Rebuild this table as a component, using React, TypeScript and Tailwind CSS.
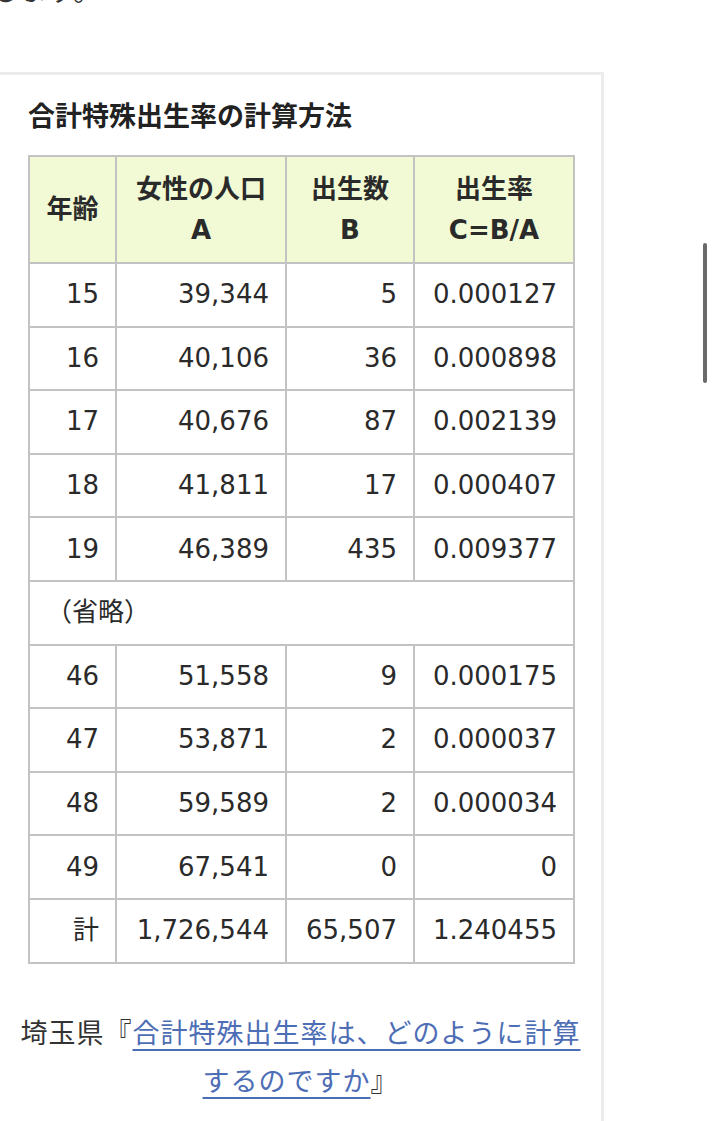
import React from 'react'

type Row = { age: string; pop: string; births: string; rate: string }

const upper: Row[] = [
  { age: '15', pop: '39,344', births: '5', rate: '0.000127' },
  { age: '16', pop: '40,106', births: '36', rate: '0.000898' },
  { age: '17', pop: '40,676', births: '87', rate: '0.002139' },
  { age: '18', pop: '41,811', births: '17', rate: '0.000407' },
  { age: '19', pop: '46,389', births: '435', rate: '0.009377' },
]

const lower: Row[] = [
  { age: '46', pop: '51,558', births: '9', rate: '0.000175' },
  { age: '47', pop: '53,871', births: '2', rate: '0.000037' },
  { age: '48', pop: '59,589', births: '2', rate: '0.000034' },
  { age: '49', pop: '67,541', births: '0', rate: '0' },
  { age: '計', pop: '1,726,544', births: '65,507', rate: '1.240455' },
]

const td = 'border-2 border-[#c3c3c3] px-[16px] text-right align-middle'
const th = 'border-2 border-[#c3c3c3] bg-[#f1fad4] text-center align-middle font-bold leading-[41px]'

function DataRow({ row }: { row: Row }) {
  return (
    <tr className="h-[63.6px]">
      <td className={td}>{row.age}</td>
      <td className={td}>{row.pop}</td>
      <td className={td}>{row.births}</td>
      <td className={td}>{row.rate}</td>
    </tr>
  )
}

export default function App() {
  return (
    <div className="relative min-h-[1121px] overflow-hidden bg-white text-[#222]">
      {/* tail of the previous paragraph */}
      <p className="ml-[-8px] mt-[-34px] font-['Noto_Sans_CJK_JP',sans-serif] text-[27px] leading-[48px] tracking-[1px] text-[#333]">
        します。
      </p>

      {/* calculation box */}
      <div className="ml-[-4px] mt-[58px] w-[608px] border-[3px] border-[#ececec] pb-[30px] pl-[29px] pr-[28px] pt-[22px]">
        <h3 className="mb-[19px] font-['DejaVu_Sans','Noto_Sans_CJK_JP',sans-serif] text-[27px] font-bold leading-[39px] text-[#222]">
          合計特殊出生率の計算方法
        </h3>

        <table className="w-[545px] table-fixed border-collapse border-2 border-[#c3c3c3] font-['DejaVu_Sans','Noto_Sans_CJK_JP',sans-serif] text-[26px] text-[#2a2a2a]">
          <colgroup>
            <col className="w-[87px]" />
            <col className="w-[170px]" />
            <col className="w-[128px]" />
            <col className="w-[160px]" />
          </colgroup>
          <thead>
            <tr className="h-[107px] text-[26px]">
              <th className={th}>年齢</th>
              <th className={th}>
                女性の人口
                <br />A
              </th>
              <th className={th}>
                出生数
                <br />B
              </th>
              <th className={th}>
                出生率
                <br />
                C=B/A
              </th>
            </tr>
          </thead>
          <tbody>
            {upper.map((r) => (
              <DataRow key={r.age} row={r} />
            ))}
            <tr className="h-[63.6px]">
              <td colSpan={4} className="border-2 border-[#c3c3c3] px-[16px] text-left align-middle">
                （省略）
              </td>
            </tr>
            {lower.map((r) => (
              <DataRow key={r.age} row={r} />
            ))}
          </tbody>
        </table>

        <p className="mx-[-12px] mt-[44px] text-center font-['Noto_Sans_CJK_JP',sans-serif] text-[27px] leading-[48px] tracking-[1px] text-[#333]">
          埼玉県『
          <a href="#" className="text-[#4d6db5] underline decoration-[#4d6db5] decoration-2 underline-offset-[6px]">
            合計特殊出生率は、どのように計算するのですか
          </a>
          』
        </p>
      </div>

      {/* overlay scroll indicator */}
      <div className="absolute right-[6px] top-[243px] h-[140px] w-[4px] rounded-full bg-[#6a6a6a]" />
    </div>
  )
}
